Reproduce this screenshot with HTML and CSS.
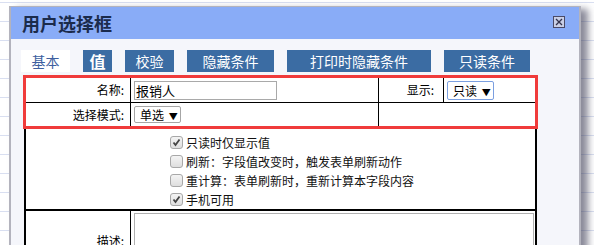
FILE: index.html
```html
<!DOCTYPE html>
<html lang="zh-CN">
<head>
  <meta charset="UTF-8">
  <title>用户选择框</title>
  <link rel="stylesheet" href="styles.css">
</head>
<body>
  <div class="page">
    <div class="dialog">
      <div class="dialog-title">
        <span class="title-text">用户选择框</span>
        <span class="close-btn">
          <svg width="12" height="12" viewBox="0 0 12 12">
            <rect x="0.5" y="0.5" width="11" height="11" fill="#c9cfe6" stroke="#4a4a66"/>
            <path d="M3 3 L9 9 M9 3 L3 9" stroke="#33334d" stroke-width="1.3"/>
          </svg>
        </span>
      </div>
      <div class="dialog-body">
        <div class="tabs">
          <span class="tab tab-active w49">基本</span>
          <span class="tab tab-big w29">值</span>
          <span class="tab w49">校验</span>
          <span class="tab w87">隐藏条件</span>
          <span class="tab w144">打印时隐藏条件</span>
          <span class="tab w86">只读条件</span>
        </div>
        <div class="form">
          <div class="highlight">
            <div class="row row-first">
              <div class="cell label">名称:</div>
              <div class="cell field"><span class="text-input">报销人</span></div>
              <div class="cell label label-narrow">显示:</div>
              <div class="cell field"><span class="select select-focus">只读 <i>▼</i></span></div>
            </div>
            <div class="row row-second">
              <div class="cell label">选择模式:</div>
              <div class="cell field"><span class="select">单选 <i>▼</i></span></div>
              <div class="cell cell-wide"></div>
            </div>
          </div>
          <div class="lower">
            <div class="options">
              <div class="option"><span class="cb cb-on"><svg width="9" height="9" viewBox="0 0 9 9"><path d="M1.5 4.5 L3.5 7 L7.5 1.5" fill="none" stroke="#444" stroke-width="1.8"/></svg></span>只读时仅显示值</div>
              <div class="option"><span class="cb"></span>刷新：字段值改变时，触发表单刷新动作</div>
              <div class="option"><span class="cb"></span>重计算：表单刷新时，重新计算本字段内容</div>
              <div class="option"><span class="cb cb-on"><svg width="9" height="9" viewBox="0 0 9 9"><path d="M1.5 4.5 L3.5 7 L7.5 1.5" fill="none" stroke="#444" stroke-width="1.8"/></svg></span>手机可用</div>
            </div>
            <div class="desc-row">
              <div class="cell label">描述:</div>
              <div class="cell field"><div class="textarea"></div></div>
            </div>
          </div>
        </div>
      </div>
    </div>
  </div>
</body>
</html>
```

FILE: styles.css
```css
html, body {
  margin: 0;
  height: 245px;
  overflow: hidden;
}
body {
  font-family: "Noto Sans CJK SC", "Liberation Sans", sans-serif;
  color: #000;
}
.page {
  height: 245px;
  padding-top: 6px;
  padding-left: 9px;
  box-sizing: border-box;
  background: #fff repeating-linear-gradient(to bottom, transparent 0, transparent 2px, #d9dff1 2px, #d9dff1 3px, transparent 3px, transparent 19px);
}
.dialog {
  width: 572px;
  height: 260px;
  box-sizing: border-box;
  border: 2px solid #b3b3bd;
  border-top-width: 1px;
  background: #f5f6fb;
  box-shadow: 7px 3px 7px rgba(60, 60, 85, 0.6);
}
.dialog-title {
  height: 32px;
  background: #89acf7;
  display: flex;
  align-items: center;
  justify-content: space-between;
  padding: 0 14px 0 11px;
}
.title-text {
  font-size: 18px;
  font-weight: bold;
  color: #1b2b4c;
  line-height: 32px;
}
.close-btn {
  display: flex;
  width: 12px;
  height: 12px;
  margin-top: -2px;
}
.dialog-body {
  padding: 11px 0 0 10px;
}
.tabs {
  display: flex;
  gap: 13px;
  height: 22px;
}
.tab {
  background: #3b6ca3;
  color: #fff;
  font-size: 14px;
  line-height: 22px;
  text-align: center;
}
.tab-active {
  background: #fff;
  color: #3e5f9f;
}
.tab-big {
  font-size: 16px;
  font-weight: bold;
}
.w29 { width: 29px; }
.w49 { width: 49px; }
.w86 { width: 86px; }
.w87 { width: 87px; }
.w144 { width: 144px; }
.form {
  margin: 3px 0 0 2px;
  width: 515px;
}
.highlight {
  border: 3px solid #f03b3b;
  background: #fff;
}
.row {
  display: grid;
  grid-template-columns: 104px 248px 65px 1fr;
}
.row-first {
  height: 24px;
  border-bottom: 1px solid #000;
}
.row-second {
  height: 23px;
  grid-template-columns: 104px 248px 1fr;
}
.cell {
  display: flex;
  align-items: center;
  font-size: 12px;
  line-height: 16px;
}
.cell + .cell {
  border-left: 1px solid #000;
}
.label {
  justify-content: flex-end;
  padding-right: 6px;
}
.label-narrow {
  padding-right: 9px;
}
.field {
  padding-left: 3px;
}
.text-input {
  width: 140px;
  height: 17px;
  border: 1px solid #a9a9a9;
  font-size: 13px;
  line-height: 17px;
  padding-left: 1px;
  background: #fff;
}
.select {
  width: 40px;
  height: 15px;
  border: 1px solid #a6a6a6;
  border-radius: 2px;
  font-size: 12px;
  line-height: 15px;
  padding-left: 5px;
  background: #fff;
  white-space: nowrap;
}
.select i {
  font-style: normal;
  font-size: 9px;
  margin-left: 2px;
}
.select-focus {
  height: 17px;
  line-height: 17px;
  border-color: #7b9fe0;
}
.lower {
  margin: 0 1px;
  border: 2px solid #000;
  border-top: none;
  background: #fff;
}
.options {
  height: 76px;
  padding: 4px 0 0 144px;
  border-bottom: 2px solid #000;
}
.option {
  display: flex;
  align-items: center;
  height: 19px;
  font-size: 12px;
  color: #111;
}
.cb {
  width: 11px;
  height: 11px;
  border: 1px solid #a8a8a8;
  border-radius: 3px;
  background: linear-gradient(#f4f4f4, #dedede);
  margin-right: 3px;
  display: flex;
  align-items: center;
  justify-content: center;
}
.desc-row {
  display: grid;
  grid-template-columns: 104px 1fr;
  height: 60px;
}
.desc-row .field {
  align-items: flex-start;
  padding: 2px 1px 0 3px;
}
.textarea {
  width: 100%;
  height: 56px;
  border: 1px solid #b0b0b0;
  box-sizing: border-box;
}
```
